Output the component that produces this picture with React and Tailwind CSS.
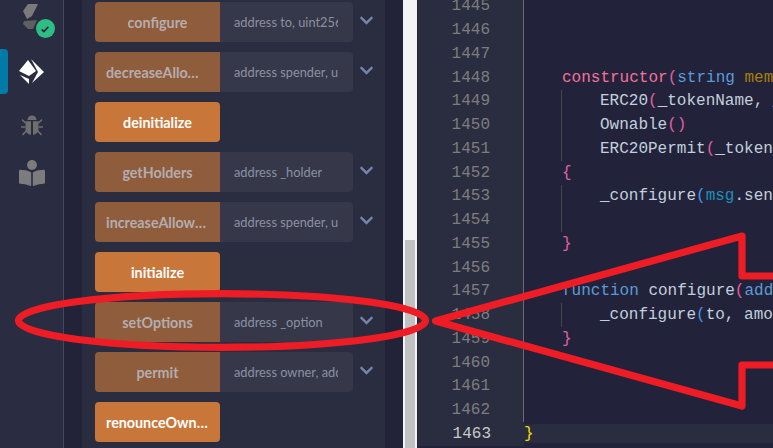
import React from 'react'
import { FaBookReader, FaChevronDown } from 'react-icons/fa'

const functions = [
  { name: 'configure', args: 'address to, uint256 amount', pay: true },
  { name: 'decreaseAllowance', args: 'address spender, uint256', pay: true },
  { name: 'deinitialize' },
  { name: 'getHolders', args: 'address _holder', pay: true },
  { name: 'increaseAllowance', args: 'address spender, uint256', pay: true },
  { name: 'initialize' },
  { name: 'setOptions', args: 'address _option', pay: true },
  { name: 'permit', args: 'address owner, address', pay: true },
  { name: 'renounceOwnership' },
]

const P = ({ c = 'pink', children }) => (
  <span className={c === 'pink' ? 'text-[#e05fa8]' : 'text-[#3f9ae8]'}>{children}</span>
)

const lines = [
  { n: 1445 },
  { n: 1446 },
  { n: 1447 },
  { n: 1448, code: <><span className="text-[#f4719c]">constructor</span><P>(</P><span className="text-[#5b9bd8]">string</span> <span className="text-[#a57f0c]">memory</span></> },
  { n: 1449, guide: true, code: <>ERC20<P>(</P>_tokenName, _tokenSymbol<P>)</P></> },
  { n: 1450, guide: true, code: <>Ownable<P>()</P></> },
  { n: 1451, guide: true, code: <>ERC20Permit<P>(</P>_tokenName<P>)</P></> },
  { n: 1452, code: <P>{'{'}</P> },
  { n: 1453, guide: true, code: <>_configure<P c="blue">(</P><span className="text-[#1f8fb8]">msg</span>.sender, amount<P c="blue">)</P>;</> },
  { n: 1454, guide: true },
  { n: 1455, code: <P>{'}'}</P> },
  { n: 1456 },
  { n: 1457, code: <><span className="text-[#5b9bd8]">function</span> configure<P>(</P><span className="text-[#5b9bd8]">address</span> to<P>)</P></> },
  { n: 1458, guide: true, code: <>_configure<P c="blue">(</P>to, amount<P c="blue">)</P>;</> },
  { n: 1459, code: <P>{'}'}</P> },
  { n: 1460 },
  { n: 1461 },
  { n: 1462 },
]

function SolidityBadge() {
  return (
    <div className="relative h-[46px] w-full">
      <svg viewBox="0 0 64 46" className="h-[46px] w-[64px]">
        <path d="M28 4h10l-6 12-5 3-4-8z" fill="#7a7a7a" />
        <path d="M24 21l13-1-4 9h-5l-5-5z" fill="#5f5f5f" />
      </svg>
      <div className="absolute left-[35.500px] top-[19px] flex h-[19px] w-[19px] items-center justify-center rounded-full bg-[#2ebd85]">
        <svg viewBox="0 0 12 12" className="h-[10px] w-[10px]" fill="none" stroke="#1f2a38" strokeWidth="2">
          <path d="M2 6.500l2.600 2.500L10 3.500" />
        </svg>
      </div>
    </div>
  )
}

function EthIcon() {
  return (
    <svg viewBox="0 0 26 26" className="h-[26px] w-[26px]" fill="#fff">
      <path d="M9 1L0 12l10 5 7-5z" />
      <path d="M12 0l13 13-12 11 6-11z" />
      <path d="M1 16l9 9v-5z" />
    </svg>
  )
}

function BugIcon() {
  return (
    <svg viewBox="0 0 22 22" className="h-[22px] w-[22px]" fill="#6e6e6e">
      <path d="M6.500 5c0-3 2-4.500 4.500-4.500S15.500 2 15.500 5z" />
      <path d="M4.500 6.200h5.500v13.500c-3-.3-5.500-2.300-5.500-5.700z" />
      <path d="M12 6.200h5.500V14c0 3.400-2.500 5.400-5.500 5.700z" />
      <path d="M4.500 8L1 4.500M17.500 8L21 4.500M4.500 12H0M17.500 12H22M5 16l-3.500 4M17 16l3.500 4" stroke="#6e6e6e" strokeWidth="1.600" fill="none" />
    </svg>
  )
}

function Row({ name, args, pay }) {
  return (
    <div className="flex h-10 items-center">
      <div className={`flex h-10 w-[125px] items-center justify-center px-[11px] pt-[1px] text-[14.300px] font-bold ${pay ? 'rounded-l bg-[#8f5c3c] text-[#b3adb0]' : 'rounded bg-[#c8763a] text-white'}`}>
        <span className="truncate">{name}</span>
      </div>
      {pay && (
        <>
          <div className="flex h-10 w-[133px] items-center rounded-r bg-[#363849] pl-[14px] pr-[15px] pt-[1px] text-[12.800px] text-[#8b90a3]">
            <span className="overflow-hidden whitespace-nowrap">{args}</span>
          </div>
          <FaChevronDown className="-mt-[3px] ml-[6px] h-[15px] w-[15px] text-[#7484ad]" />
        </>
      )}
    </div>
  )
}

export default function App() {
  return (
    <div className="relative flex h-[448px] w-[773px] overflow-hidden bg-[#22233a] font-['Lato','Liberation_Sans',sans-serif]">
      <aside className="flex h-full w-[64px] shrink-0 flex-col items-center border-r border-[#454859] bg-[#2a2d41]">
        <SolidityBadge />
        <div className="relative mt-[3px] flex h-[45px] w-full items-center justify-center">
          <div className="absolute left-0 top-0 h-[45px] w-[8px] rounded-r bg-[#007aa6]" />
          <EthIcon />
        </div>
        <div className="mt-[21px]"><BugIcon /></div>
        <FaBookReader className="mt-[23px] h-[26px] w-[26px] text-[#7c7c7c]" />
      </aside>
      <div className="w-[18px] shrink-0 bg-[#222338]" />
      <section className="flex h-full w-[303px] shrink-0 flex-col gap-[10px] bg-[#2a2d3f] pl-[13px] pt-[2px]">
        {functions.map((f) => <Row key={f.name} {...f} />)}
      </section>
      <div className="w-[18px] shrink-0 bg-[#222338]" />
      <div className="flex w-[14px] shrink-0 flex-col bg-[#f3f3f3] px-[2px] pt-[240px]">
        <div className="flex-1 bg-[#c1c1c1]" />
      </div>
      <div className="w-px shrink-0 bg-[#22233a]" />
      <main className="flex min-w-0 flex-1 flex-col bg-[#22233a] font-['Liberation_Mono',monospace] text-[16px] text-[#c3cfdd]">
        <div className="-mt-[5.500px]">
          {lines.map((l) => (
            <div key={l.n} className="flex h-[23.750px] items-center whitespace-nowrap">
              <div className="flex h-full w-[106px] shrink-0 items-center justify-end border-r border-[#6b6c73] bg-[#2a2d40] pr-[33px] text-[#7d7d7d]">{l.n}</div>
              {l.guide ? (
                <div className="ml-[37px] flex h-full items-center border-l border-[#44454f] pl-[38px]">{l.code}</div>
              ) : (
                <div className="pl-[38px]">{l.code}</div>
              )}
            </div>
          ))}
          <div className="flex h-[23.750px] items-center whitespace-nowrap">
            <div className="flex h-full w-[106px] shrink-0 items-center justify-end bg-[#2a2d40] pr-[33px] text-[#c9c9c9]">1463</div>
            <div className="flex h-[19px] flex-1 items-center bg-[#2a2d3f] text-[#f5d90a]">{'}'}</div>
          </div>
        </div>
      </main>
      <svg viewBox="0 0 773 448" className="pointer-events-none absolute left-0 top-0 h-[448px] w-[773px]" fill="none" stroke="#ee1c25" strokeWidth="7.200">
        <ellipse cx="222" cy="320.500" rx="203.500" ry="26.800" />
        <path d="M780 276H742V236L435.500 321L742 406V365H780" strokeLinejoin="round" />
      </svg>
    </div>
  )
}
